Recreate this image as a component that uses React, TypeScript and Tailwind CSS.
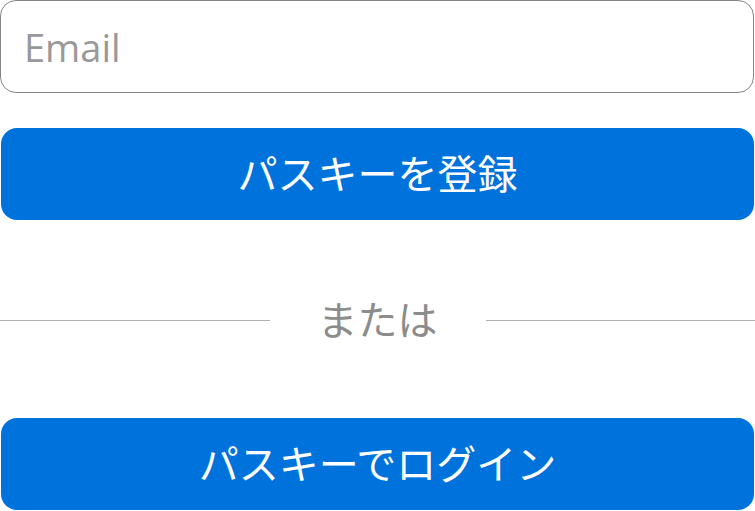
export default function App() {
  const font = { fontFamily: '"Open Sans", "Noto Sans CJK JP", sans-serif' };
  return (
    <div className="w-[755px] h-[511px] bg-white" style={font}>
      <div className="flex flex-col">
        <input
          type="email"
          placeholder="Email"
          className="box-border h-[93px] w-[754px] rounded-[16px] border-[1.5px] border-[#858585] px-[23px] text-[38px] text-[#333] outline-none placeholder:text-[#999999]"
        />
        <button
          type="button"
          className="mt-[35px] ml-px flex h-[92px] w-[753px] items-center justify-center rounded-[16px] bg-[#0072dc] text-[40px] text-white"
        >
          パスキーを登録
        </button>
        <div className="mt-[50px] flex h-[100px] items-center">
          <div className="h-px flex-1 bg-[#b0b0b0]" />
          <span className="px-[48px] text-[40px] leading-none text-[#8c8c8c]">または</span>
          <div className="h-px flex-1 bg-[#b0b0b0]" />
        </div>
        <button
          type="button"
          className="mt-[48px] ml-px flex h-[92px] w-[753px] items-center justify-center rounded-[16px] bg-[#0072dc] text-[40px] text-white"
        >
          パスキーでログイン
        </button>
      </div>
    </div>
  );
}
